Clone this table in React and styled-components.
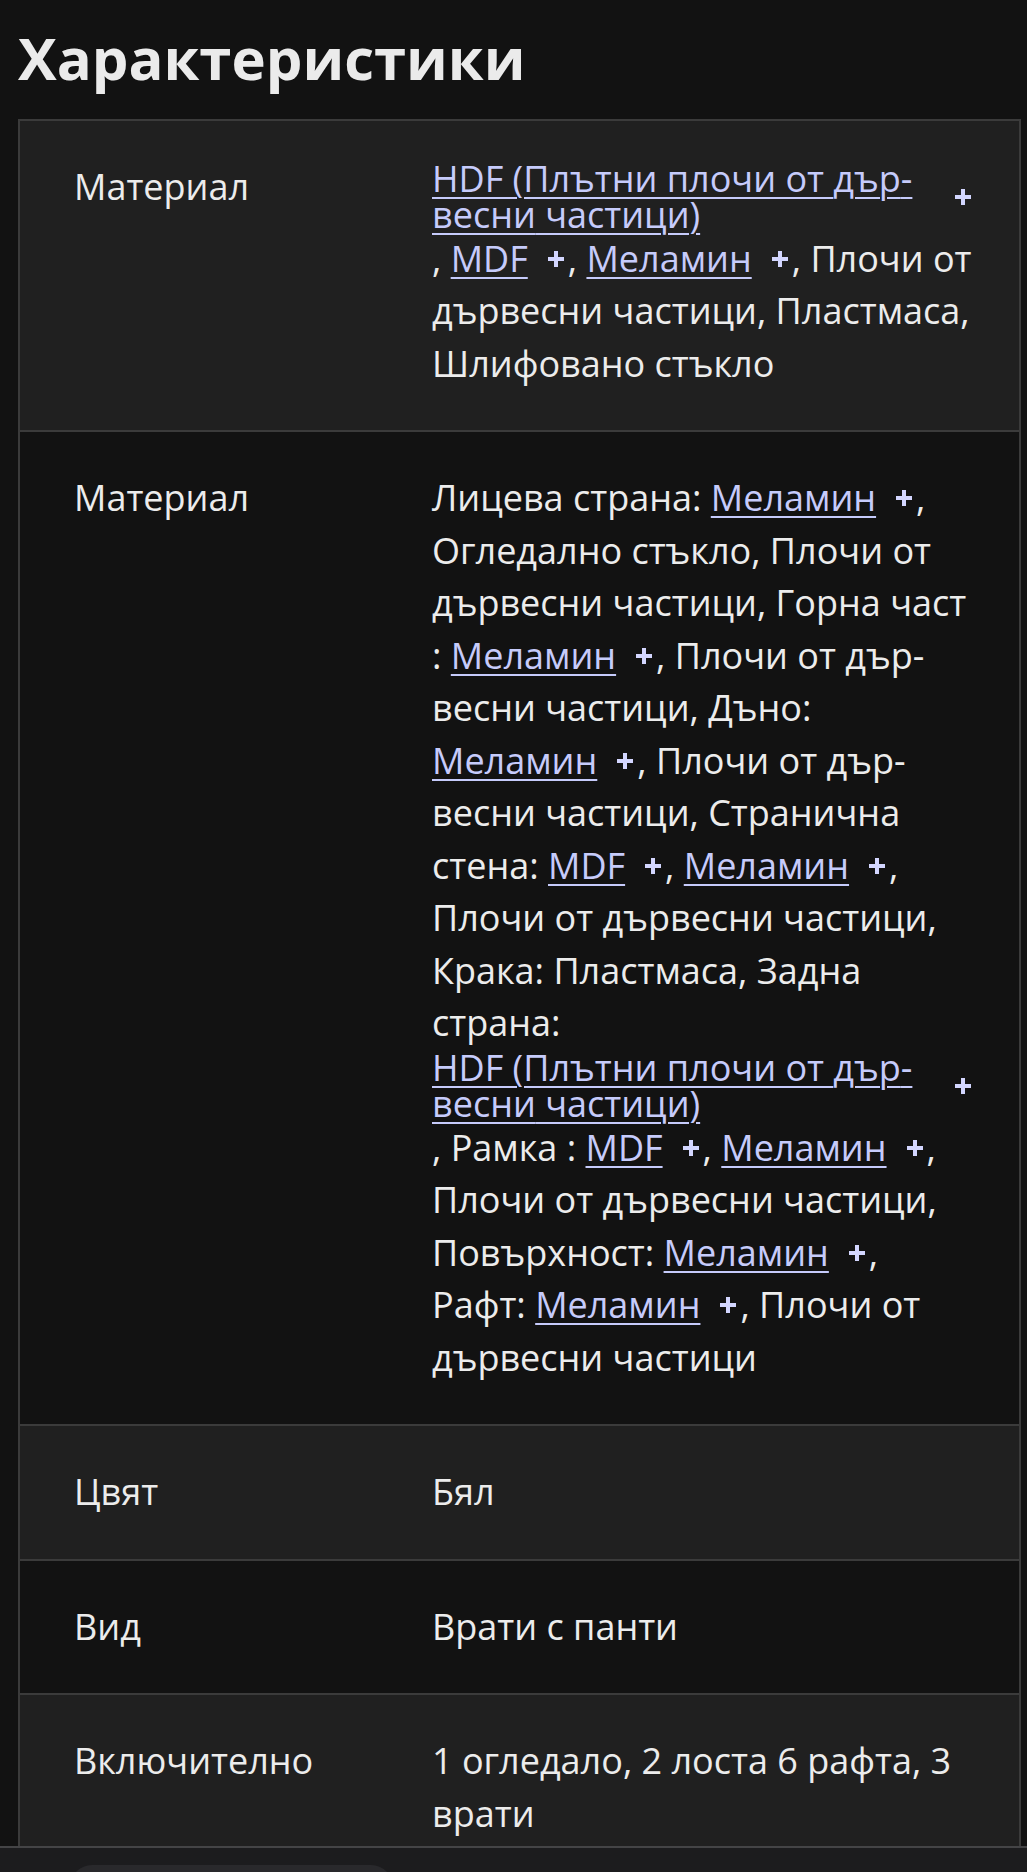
import React from 'react';
import styled, { createGlobalStyle } from 'styled-components';

const GlobalStyle = createGlobalStyle`
    html, body {
        margin: 0;
        padding: 0;
        background: #121212;
        overflow: hidden;
    }
    body {
        font-family: "Open Sans", "Noto Sans", sans-serif;
        color: #ececec;
    }
`

const Page = styled.div`
    padding: 23px 6px 0 18px;
`

const Title = styled.h2`
    margin: 0 0 26px 0;
    font-size: 58px;
    line-height: 1.2;
    font-weight: 700;
    color: #ebebeb;
`

const SpecTable = styled.div`
    border: 2px solid #3b3b3b;
    border-bottom: 0;
`

const SpecRow = styled.div`
    display: grid;
    grid-template-columns: 412px 1fr;
    background: ${p => (p.$odd ? '#202020' : '#121212')};
    & + & {
        border-top: 2px solid #3b3b3b;
    }
`

const SpecLabel = styled.div`
    padding: 40px 0 40px 54px;
    font-size: 36px;
    line-height: 52.5px;
`

const SpecValue = styled.div`
    padding: 40px 44px 40px 0;
    font-size: 36px;
    line-height: 52.5px;
`

const LinkItem = styled.span`
    display: ${p => (p.$wide ? 'flex' : 'inline-flex')};
    align-items: center;
    line-height: 36px;
`

const Link = styled.a`
    color: #c6cbfb;
    text-decoration: underline;
    text-decoration-thickness: 2px;
    text-underline-offset: 5px;
    cursor: pointer;
`

const PlusButton = styled.span`
    display: inline-flex;
    flex: none;
    margin-left: 19px;
    margin-right: 3px;
    color: #d3d6ff;
`

const BottomBar = styled.div`
    position: fixed;
    left: 0;
    right: 0;
    bottom: 0;
    height: 24px;
    overflow: hidden;
    background: #1c1c1e;
    border-top: 2px solid #444446;
`

const SearchPill = styled.div`
    margin: 17px 0 0 70px;
    width: 323px;
    height: 44px;
    border-radius: 22px;
    background: #29292c;
`

const Plus = () => (
    <PlusButton>
        <svg width="18" height="18" viewBox="0 0 18 18">
            <path d="M9 1v16M1 9h16" stroke="currentColor" strokeWidth="4" fill="none" />
        </svg>
    </PlusButton>
)

const MatLink = ({ children, wide }) => (
    <LinkItem $wide={wide}>
        <Link>{children}</Link>
        <Plus />
    </LinkItem>
)

const D = 'дър\u00ADвесни'

const specs = [
    {
        label: 'Материал',
        value: (
            <>
                <MatLink wide>HDF (Плътни плочи от {D} частици)</MatLink>
                , <MatLink>MDF</MatLink>, <MatLink>Меламин</MatLink>, Плочи от {D} частици, Пластмаса, Шлифовано стъкло
            </>
        ),
    },
    {
        label: 'Материал',
        value: (
            <>
                Лицева страна: <MatLink>Меламин</MatLink>, Огледално стъкло, Плочи от {D} частици, Горна част
                : <MatLink>Меламин</MatLink>, Плочи от {D} частици, Дъно: <MatLink>Меламин</MatLink>, Плочи от {D} частици,
                Странична стена: <MatLink>MDF</MatLink>, <MatLink>Меламин</MatLink>, Плочи от {D} частици, Крака:
                Пластмаса, Задна страна:
                <MatLink wide>HDF (Плътни плочи от {D} частици)</MatLink>
                , Рамка : <MatLink>MDF</MatLink>, <MatLink>Меламин</MatLink>, Плочи от {D} частици,
                Повърхност: <MatLink>Меламин</MatLink>, Рафт: <MatLink>Меламин</MatLink>, Плочи от {D} частици
            </>
        ),
    },
    { label: 'Цвят', value: 'Бял' },
    { label: 'Вид', value: 'Врати с панти' },
    { label: 'Включително', value: '1 огледало, 2 лоста 6 рафта, 3 врати' },
]

export default function App() {
    return (
        <>
            <GlobalStyle />
            <Page lang="bg">
                <Title>Характеристики</Title>
                <SpecTable>
                    {specs.map((s, i) => (
                        <SpecRow key={i} $odd={i % 2 === 0}>
                            <SpecLabel>{s.label}</SpecLabel>
                            <SpecValue>{s.value}</SpecValue>
                        </SpecRow>
                    ))}
                </SpecTable>
            </Page>
            <BottomBar>
                <SearchPill />
            </BottomBar>
        </>
    );
}
